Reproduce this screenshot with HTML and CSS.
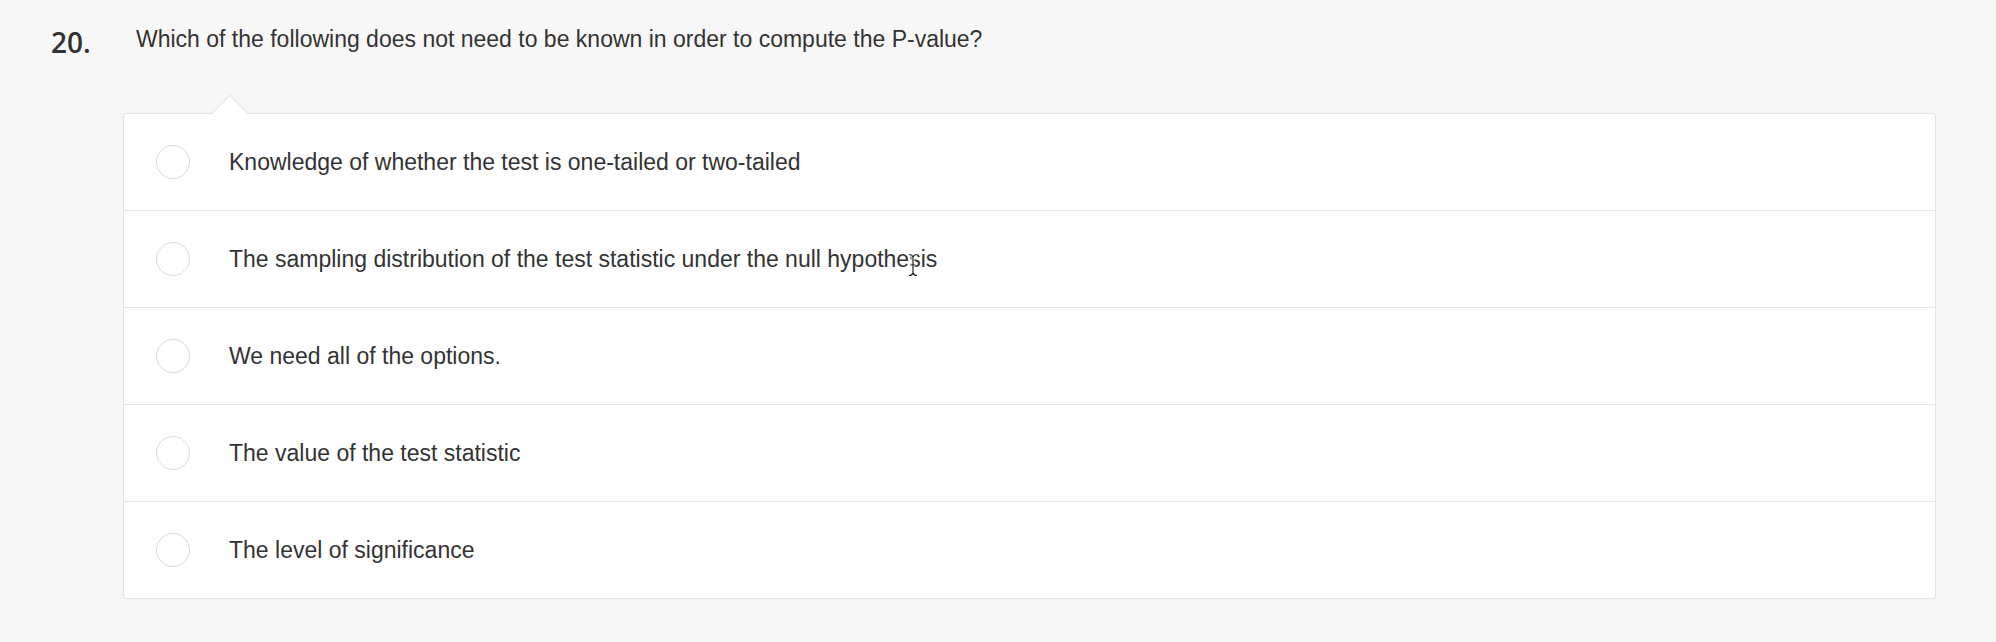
FILE: index.html
```html
<!DOCTYPE html>
<html lang="en">
<head>
<meta charset="utf-8">
<title>Question 20</title>
<link rel="stylesheet" href="styles.css">
</head>
<body>
<div class="question">
  <div class="q-head">
    <div class="q-num">20.</div>
    <div class="q-text">Which of the following does not need to be known in order to compute the P-value?</div>
  </div>
  <div class="answers">
    <span class="notch"></span>
    <label class="option"><span class="radio"></span><span class="opt-text">Knowledge of whether the test is one-tailed or two-tailed</span></label>
    <label class="option"><span class="radio"></span><span class="opt-text">The sampling distribution of the test statistic under the null hypothesis</span></label>
    <label class="option"><span class="radio"></span><span class="opt-text">We need all of the options.</span></label>
    <label class="option"><span class="radio"></span><span class="opt-text">The value of the test statistic</span></label>
    <label class="option"><span class="radio"></span><span class="opt-text">The level of significance</span></label>
    <svg class="cursor" width="12" height="24" viewBox="0 0 12 24" aria-hidden="true"><path d="M2 1.5 C4 1.5 5.5 2.5 6 4 C6.5 2.5 8 1.5 10 1.5 M6 4 V20 M2 22.5 C4 22.5 5.5 21.5 6 20 C6.5 21.5 8 22.5 10 22.5 M3.5 12 H8.5" fill="none" stroke="#fff" stroke-width="3"/><path d="M2 1.5 C4 1.5 5.5 2.5 6 4 C6.5 2.5 8 1.5 10 1.5 M6 4 V20 M2 22.5 C4 22.5 5.5 21.5 6 20 C6.5 21.5 8 22.5 10 22.5 M3.5 12 H8.5" fill="none" stroke="#222" stroke-width="1.2"/></svg>
  </div>
</div>
</body>
</html>
```
FILE: styles.css
```css
html, body {
  margin: 0;
  padding: 0;
  background: #f7f7f7;
}
body {
  font-family: "Liberation Sans", Arial, Helvetica, sans-serif;
  color: #333;
}
.question {
  padding: 23px 60px 0 51px;
}
.q-head {
  display: flex;
  align-items: flex-start;
}
.q-num {
  font-family: "Open Sans", "Liberation Sans", sans-serif;
  font-weight: 600;
  font-size: 28px;
  line-height: 38px;
  color: #333;
  width: 85px;
  flex: none;
}
.q-text {
  font-size: 23px;
  line-height: 26px;
  margin-top: 3px;
  color: #333;
}
.answers {
  position: relative;
  margin: 52px 0 0 72px;
  background: #fff;
  border: 1px solid #e4e4e4;
  border-radius: 3px;
  box-shadow: 0 1px 1px rgba(0, 0, 0, 0.03);
}
.notch {
  position: absolute;
  left: 93px;
  top: -14px;
  width: 26px;
  height: 26px;
  background: #fff;
  border-top: 1px solid #e4e4e4;
  border-left: 1px solid #e4e4e4;
  transform: rotate(45deg);
  box-sizing: border-box;
}
.option {
  position: relative;
  display: flex;
  align-items: center;
  height: 96px;
  padding-left: 32px;
  border-bottom: 1px solid #e6e6e6;
}
.option:last-of-type {
  border-bottom: none;
}
.radio {
  width: 34px;
  height: 34px;
  box-sizing: border-box;
  border: 1.5px solid #dadada;
  border-radius: 50%;
  flex: none;
  margin-right: 39px;
}
.opt-text {
  font-size: 23px;
  line-height: 26px;
  color: #333;
}
.cursor {
  position: absolute;
  left: 783px;
  top: 139px;
}
```
